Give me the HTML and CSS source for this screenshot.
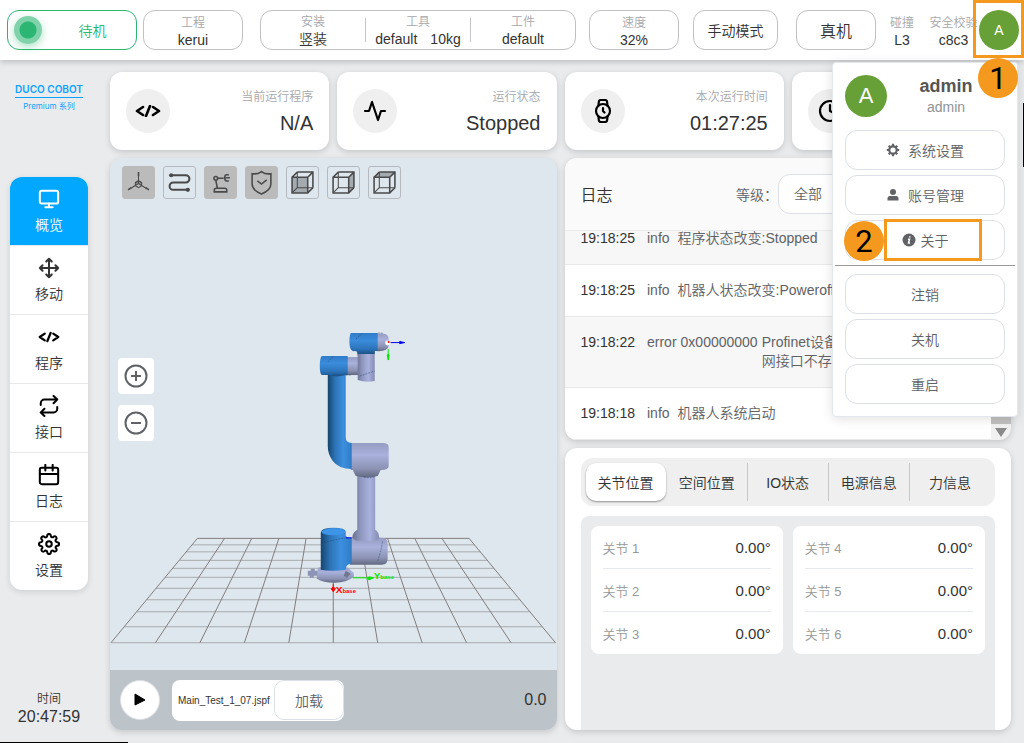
FILE: index.html
```
<!DOCTYPE html>
<html lang="zh-CN">
<head>
<meta charset="utf-8">
<meta name="viewport" content="width=device-width, initial-scale=1">
<title>DUCO COBOT</title>
<link rel="stylesheet" href="styles.css">
</head>
<body>
<svg class="defs" aria-hidden="true">
  <defs>
    <symbol id="i-code" viewBox="0 0 26 12"><path d="M8 2 2 6l6 4M15 1l-4 10M18 2l6 4-6 4"/></symbol>
    <symbol id="i-monitor" viewBox="0 0 24 24"><rect x="2" y="3" width="20" height="14" rx="2"/><path d="M8 21h8M12 17v4"/></symbol>
    <symbol id="i-move" viewBox="0 0 24 24"><path d="m5 9-3 3 3 3M9 5l3-3 3 3M15 19l-3 3-3-3M19 9l3 3-3 3M2 12h20M12 2v20"/></symbol>
    <symbol id="i-repeat" viewBox="0 0 24 24"><path d="m17 1 4 4-4 4M3 11V9a4 4 0 0 1 4-4h14M7 23l-4-4 4-4M21 13v2a4 4 0 0 1-4 4H3"/></symbol>
    <symbol id="i-calendar" viewBox="0 0 24 24"><rect x="2" y="4" width="20" height="18" rx="2"/><path d="M16 1v6M8 1v6M2 11h20"/></symbol>
    <symbol id="i-settings" viewBox="0 0 24 24"><circle cx="12" cy="12" r="3"/><path d="M19.4 15a1.65 1.65 0 0 0 .33 1.82l.06.06a2 2 0 1 1-2.83 2.83l-.06-.06a1.65 1.65 0 0 0-2.8 1.17V21a2 2 0 0 1-4 0v-.09A1.65 1.65 0 0 0 9 19.4a1.65 1.65 0 0 0-1.82.33l-.06.06a2 2 0 1 1-2.83-2.83l.06-.06a1.65 1.65 0 0 0-1.17-2.8H3a2 2 0 0 1 0-4h.09A1.65 1.65 0 0 0 4.6 9a1.65 1.65 0 0 0-.33-1.82l-.06-.06a2 2 0 1 1 2.83-2.83l.06.06A1.65 1.65 0 0 0 9 4.6h.1A1.65 1.65 0 0 0 10 3.09V3a2 2 0 0 1 4 0v.09a1.65 1.65 0 0 0 2.8 1.17l.06-.06a2 2 0 1 1 2.83 2.83l-.06.06A1.65 1.65 0 0 0 19.4 9v.1a1.65 1.65 0 0 0 1.51.9H21a2 2 0 0 1 0 4h-.09a1.65 1.65 0 0 0-1.51 1z"/></symbol>
    <symbol id="i-activity" viewBox="0 0 24 24"><path d="M22 12h-4l-3 9L9 3l-3 9H2"/></symbol>
    <symbol id="i-watch" viewBox="0 0 24 24"><circle cx="12" cy="12" r="7"/><path d="M12 9v3l1.5 1.5M16.5 17.3l-.35 3.9a2 2 0 0 1-2 1.8H9.8a2 2 0 0 1-2-1.8l-.35-3.9m0-10.6.35-3.9a2 2 0 0 1 2-1.8h4.3a2 2 0 0 1 2 1.8l.35 3.9"/></symbol>
    <symbol id="i-clock" viewBox="0 0 24 24"><circle cx="12" cy="12" r="10"/><path d="M12 6v6l4 2"/></symbol>
    <symbol id="i-cube" viewBox="0 0 24 24"><path d="M2 7h15v15H2zM7 2h15v15M22 2l-5 5M7 2 2 7M22 17l-5 5"/><path class="thin" d="M7 2v15h15M7 17l-5 5"/></symbol>
  </defs>
</svg>

<header class="topbar">
  <button class="box status" type="button"><span class="status-dot"></span><span class="status-text">待机</span></button>
  <div class="box project"><span class="cap">工程</span><span class="val">kerui</span></div>
  <div class="box setup">
    <div class="setup-cell"><span class="cap">安装</span><span class="val">竖装</span></div>
    <div class="setup-cell"><span class="cap">工具</span><span class="val pair"><span>default</span><span>10kg</span></span></div>
    <div class="setup-cell"><span class="cap">工件</span><span class="val">default</span></div>
  </div>
  <div class="box speed"><span class="cap">速度</span><span class="val">32%</span></div>
  <button class="box mode" type="button">手动模式</button>
  <button class="box machine" type="button">真机</button>
  <div class="plain collision"><span class="cap">碰撞</span><span class="val">L3</span></div>
  <div class="plain safety"><span class="cap">安全校验</span><span class="val">c8c3</span></div>
  <button class="avatar" type="button">A</button>
</header>

<div class="page">
  <aside class="side">
    <div class="logo"><span class="logo-name">DUCO COBOT</span><span class="logo-sub">Premium 系列</span></div>
    <nav class="nav">
      <a class="nav-item active" href="#overview"><svg class="icon"><use href="#i-monitor"/></svg>概览</a>
      <a class="nav-item" href="#move"><svg class="icon soft"><use href="#i-move"/></svg>移动</a>
      <a class="nav-item" href="#program"><svg class="icon code"><use href="#i-code"/></svg>程序</a>
      <a class="nav-item" href="#io"><svg class="icon"><use href="#i-repeat"/></svg>接口</a>
      <a class="nav-item" href="#log"><svg class="icon"><use href="#i-calendar"/></svg>日志</a>
      <a class="nav-item" href="#settings"><svg class="icon"><use href="#i-settings"/></svg>设置</a>
    </nav>
    <div class="clock"><span class="clock-cap">时间</span><span class="clock-val">20:47:59</span></div>
  </aside>

  <main class="grid">
    <section class="card stat"><span class="disc"><svg class="icon code"><use href="#i-code"/></svg></span><div class="stat-text"><span class="cap">当前运行程序</span><span class="big">N/A</span></div></section>
    <section class="card stat"><span class="disc"><svg class="icon"><use href="#i-activity"/></svg></span><div class="stat-text"><span class="cap">运行状态</span><span class="big">Stopped</span></div></section>
    <section class="card stat"><span class="disc"><svg class="icon"><use href="#i-watch"/></svg></span><div class="stat-text"><span class="cap">本次运行时间</span><span class="big">01:27:25</span></div></section>
    <section class="card stat"><span class="disc"><svg class="icon"><use href="#i-clock"/></svg></span></section>

    <section class="card viewer">
      <div class="scene">
        <svg class="scene-art" viewBox="110 158 447 512" role="img" aria-label="机器人">
          <defs>
            <linearGradient id="bh"><stop offset="0" stop-color="#17446f"/><stop offset=".3" stop-color="#2c73b5"/><stop offset=".65" stop-color="#3c8fdf"/><stop offset="1" stop-color="#2f7cc6"/></linearGradient>
            <linearGradient id="bv" x2="0" y2="1"><stop offset="0" stop-color="#2f7cc8"/><stop offset=".35" stop-color="#3b8cdc"/><stop offset=".75" stop-color="#2c74ba"/><stop offset="1" stop-color="#1b5187"/></linearGradient>
            <linearGradient id="gh"><stop offset="0" stop-color="#6a708f"/><stop offset=".3" stop-color="#8e96bd"/><stop offset=".65" stop-color="#a9b2df"/><stop offset="1" stop-color="#858cb0"/></linearGradient>
            <linearGradient id="gv" x2="0" y2="1"><stop offset="0" stop-color="#969dc2"/><stop offset=".35" stop-color="#a9b1dc"/><stop offset=".75" stop-color="#8b92b3"/><stop offset="1" stop-color="#62687f"/></linearGradient>
          </defs>
          <path class="grid-h" d="M192 545H475M186 552H481M179.500 560.500H487.500M172.500 568.500H494.500M165 577.500H502M156 588.500H511M147 600H520M137 612H530M124.500 627H542.500M111 643H556"/>
          <path class="grid-v" d="M197.500 538.500H469.500M197.500 538.500 111 643M224.700 538.500 155.500 643M251.900 538.500 200 643M279.100 538.500 244.500 643M306.300 538.500 289 643M333.500 538.500V643M360.700 538.500 378 643M387.900 538.500 422.500 643M415.100 538.500 467 643M442.300 538.500 511.500 643M469.500 538.500 556 643"/>
          <path fill="#8d94b5" d="M308 571h3v-2h4v2h4v5h-5v2h-4v-2h-2z"/>
          <path fill="url(#gv)" d="M318 568q16-3 30 0l6 5v4q-7 6-19 6t-18-4z"/>
          <path fill="#70768e" d="m346 571 5 3-4 4-3-2z"/>
          <path fill="url(#gv)" d="M350 538h32q6 0 6 6v15q0 6-6 6h-32z"/>
          <path fill="url(#bh)" d="M321 533q0-5 13-5 12 0 12 4v4q1 2 6 2v26q-6 0-6 6-14 2-25 0z"/>
          <ellipse cx="333.500" cy="532" rx="12" ry="3.500" fill="#3e94e6"/>
          <path fill="url(#gh)" d="M357.500 473h18v57q4 2 4 9l-3 2h-20l-4-3q0-5 5-8z"/>
          <path fill="url(#gv)" d="M351 443h32q6 0 6 4v19q0 4-8 4l-3 6q-11 3-22 0l-3-6h-2z"/>
          <path fill="url(#bh)" d="M328 371h18v66q0 6 6 6v26q-13 0-19-8-5-7-5-15z"/>
          <path fill="url(#gv)" d="M346 357h16v18h-16z"/>
          <path fill="url(#gh)" d="M357 350h18v31q-9 2-17-1v-23z"/>
          <path fill="url(#bv)" d="M322 356h26v19h-3q-8 3-16 0h-7q-2-1-2-9t2-10z"/>
          <path fill="url(#gv)" d="M376 334q12-2 13 4v8q-1 6-13 5z"/>
          <path fill="url(#bv)" d="M351 333h27v18h-3v3h-17q0-3-3-3-4 1-5-5-1-9 1-13z"/>
          <path class="seam" d="m356 339 7-6M328 362l6-6M360 376l15-5M364 477q8 2 12-1M378 561q3-8 5-20M321 543l24-5M334 375h18M378 333h5"/>
          <path stroke="#0000f0" fill="#0000f0" d="M391 342.500h8l1-1 5 1-5 1-1-1M346 538h6"/>
          <path stroke="#00e800" fill="#00e800" d="M388.500 349v5l-1 1 1 5 1-5-1-1M353 578h15l1-1 5 1-5 2-1-2"/>
          <circle cx="388" cy="343" r="2.500" fill="#fff"/><circle cx="389" cy="342" r="1" fill="red"/>
          <path stroke="red" fill="red" d="M333.500 584v3l2 2-2 3-2-3 2-2"/>
          <text class="axis axis-x" x="336" y="593">X<tspan class="sub">base</tspan></text>
          <text class="axis axis-y" x="374" y="579">Y<tspan class="sub">base</tspan></text>
        </svg>
        <div class="tools">
          <button class="tool on" type="button" aria-label="坐标系"><svg viewBox="0 0 24 24"><path class="thin" d="M12 13V3m0 10-8 5m8-5 8 5M9 12l3-2 3 2v3l-3 2-3-2zm0 0 3 1 3-1"/><path d="M12 2v4M2 19l3-2M22 19l-3-2"/></svg></button>
          <button class="tool" type="button" aria-label="轨迹"><svg viewBox="0 0 24 24"><path class="bold" d="M4 5h14a3.500 3.500 0 0 1 0 7H6a3.500 3.500 0 0 0 0 7h14"/><circle class="fill" cx="4" cy="5" r="2"/><circle class="fill" cx="20" cy="19" r="2"/></svg></button>
          <button class="tool on" type="button" aria-label="机器人模型"><svg viewBox="0 0 24 24"><path d="M6 19.500q0-2 2-2h8q2 0 2 2v1.500H6zM9 17.500 7.500 10M9 8h6M20 4.500h-2q-2 0-2 3t2 3h2M17 7.500h4"/><circle cx="7.500" cy="8" r="1.800"/></svg></button>
          <button class="tool on" type="button" aria-label="安全"><svg viewBox="0 0 24 24"><path d="M12 1.500q4 3 9 2v10q0 6-9 9.500-9-3.500-9-9.500v-10q5 1 9-2zM8 10.500l4 3 5-4"/></svg></button>
          <button class="tool" type="button" aria-label="前视图"><svg viewBox="0 0 24 24"><path class="face" d="M2 7h15v15H2z"/><use href="#i-cube"/></svg></button>
          <button class="tool" type="button" aria-label="右视图"><svg viewBox="0 0 24 24"><path class="face" d="m17 7 5-5v15l-5 5z"/><use href="#i-cube"/></svg></button>
          <button class="tool" type="button" aria-label="俯视图"><svg viewBox="0 0 24 24"><path class="face" d="m2 7 5-5h15l-5 5z"/><use href="#i-cube"/></svg></button>
        </div>
        <div class="zoom">
          <button class="zoom-btn" type="button" aria-label="放大"><svg viewBox="0 0 24 24"><circle cx="12" cy="12" r="10.500"/><path d="M12 7v10M7 12h10"/></svg></button>
          <button class="zoom-btn" type="button" aria-label="缩小"><svg viewBox="0 0 24 24"><circle cx="12" cy="12" r="10.500"/><path d="M7 12h10"/></svg></button>
        </div>
      </div>
      <div class="runbar">
        <button class="play" type="button" aria-label="运行"><svg viewBox="0 0 12 14"><path d="M1 1v11l10-5z"/></svg></button>
        <div class="file"><span class="file-name">Main_Test_1_07.jspf</span><button class="load" type="button">加载</button></div>
        <span class="ratio">0.0</span>
      </div>
    </section>

    <section class="card log">
      <div class="log-head">
        <h2>日志</h2>
        <label for="level">等级：</label>
        <select id="level"><option>全部</option></select>
      </div>
      <div class="log-body">
        <div class="log-list">
          <div class="row alt"><time>19:18:25</time><span>info</span><span></span><p>程序状态改变:Stopped</p></div>
          <div class="row"><time>19:18:25</time><span>info</span><span></span><p>机器人状态改变:Poweroff</p></div>
          <div class="row alt"><time>19:18:22</time><span>error</span><span>0x00000000</span><p>Profinet设备错误<br>网接口不存在</p></div>
          <div class="row"><time>19:18:18</time><span>info</span><span></span><p>机器人系统启动</p></div>
        </div>
        <div class="bar"><svg viewBox="0 0 20 16"><path d="M4 4h12l-6 9z"/></svg></div>
      </div>
    </section>

    <section class="card info">
      <div class="tabs" role="tablist">
        <button class="tab selected" role="tab" aria-selected="true" type="button">关节位置</button>
        <button class="tab" role="tab" type="button">空间位置</button>
        <button class="tab" role="tab" type="button">IO状态</button>
        <button class="tab" role="tab" type="button">电源信息</button>
        <button class="tab" role="tab" type="button">力信息</button>
      </div>
      <div class="joints">
        <dl class="joint-card">
          <div><dt>关节 1</dt><dd>0.00°</dd></div>
          <div><dt>关节 2</dt><dd>0.00°</dd></div>
          <div><dt>关节 3</dt><dd>0.00°</dd></div>
        </dl>
        <dl class="joint-card">
          <div><dt>关节 4</dt><dd>0.00°</dd></div>
          <div><dt>关节 5</dt><dd>0.00°</dd></div>
          <div><dt>关节 6</dt><dd>0.00°</dd></div>
        </dl>
      </div>
    </section>
  </main>
</div>

<div class="menu">
  <div class="menu-user">
    <span class="menu-avatar">A</span>
    <div class="menu-names"><strong>admin</strong><span>admin</span></div>
  </div>
  <div class="menu-group">
    <button class="menu-btn" type="button"><svg viewBox="0 0 14 14"><circle class="ring" cx="7" cy="7" r="3.700"/><path class="teeth" d="M7 3V.800M7 11v2.200M3 7H.800M11 7h2.200M4 4 2.700 2.700M10 4l1.300-1.300M4 10l-1.300 1.300M10 10l1.300 1.300"/></svg>系统设置</button>
    <button class="menu-btn" type="button"><svg viewBox="0 0 14 14"><circle cx="7" cy="4" r="3"/><path d="M1.500 12.500v-2Q1.500 8 4 8h6q2.500 0 2.500 2.500v2z"/></svg>账号管理</button>
    <button class="menu-btn about" type="button"><svg viewBox="0 0 14 14"><circle cx="7" cy="7" r="6.500"/><path class="mark" d="M7.800 3.200v1.200M6 6.200h1.500L6.500 10H8"/></svg>关于</button>
  </div>
  <div class="menu-group second">
    <button class="menu-btn" type="button">注销</button>
    <button class="menu-btn" type="button">关机</button>
    <button class="menu-btn" type="button">重启</button>
  </div>
  <span class="mark-box box-two"></span>
  <span class="mark-num num-two">2</span>
</div>
<span class="mark-box box-one"></span>
<span class="mark-num num-one">1</span>
<span class="edge-right"></span>
<span class="edge-bottom"></span>
</body>
</html>
```
FILE: styles.css
```
* { box-sizing: border-box; }

body {
  margin: 0;
  min-height: 100vh;
  display: flex;
  flex-direction: column;
  position: relative;
  background: #eaebed;
  color: #333;
  font-family: "Liberation Sans", "Noto Sans CJK SC", sans-serif;
  font-size: 14px;
  font-weight: 350;
}

button, select {
  font: inherit;
  color: inherit;
  margin: 0;
  padding: 0;
  background: #fff;
}

h2, p, dl, dd { margin: 0; }
.defs { position: absolute; width: 0; height: 0; }

/* top bar */
.topbar {
  display: flex;
  align-items: center;
  height: 60px;
  padding: 0 5px 0 7px;
  background: #fff;
  box-shadow: 0 2px 6px rgba(0, 0, 0, .2);
}
.box {
  height: 40px;
  border: 1px solid #bfc1c4;
  border-radius: 12px;
  background: #fff;
}
.status { flex: 1 1 130px; margin-right: 6px; display: flex; align-items: center; padding: 0 6px; border-color: #2bb673; color: #2bb673; }
.status-dot { width: 28px; height: 28px; border-radius: 50%; background: radial-gradient(circle, #2bb673 8px, #80d2aa 9px); box-shadow: 0 3px 8px rgba(43, 182, 115, .4); }
.status-text { flex: 1; padding-left: 13px; }
.project { flex: 1 1 100px; margin-right: 17px; }
.setup { flex: 3 1 316px; margin-right: 13px; }
.speed { flex: 1 1 90px; margin-right: 14px; }
.mode { flex: 1 1 85px; margin-right: 18px; }
.machine { flex: 1 1 80px; margin-right: 12px; font-size: 16px; }
.project, .speed, .plain, .setup-cell {
  display: flex;
  flex-direction: column;
  align-items: center;
  justify-content: center;
}
.project, .speed, .plain { padding-top: 2px; }
.setup { display: flex; align-items: center; }
.setup-cell { flex: 1 1 0; }
.setup-cell + .setup-cell { border-left: 1px solid #c3c5c8; height: 24px; }
.cap { font-size: 12px; line-height: 18px; color: #a5a8ad; white-space: nowrap; }
.val { font-size: 14px; line-height: 16px; white-space: nowrap; }
.pair { display: flex; gap: 13px; }
.plain { height: 40px; }
.collision { flex: 0 0 28px; margin-right: 12px; }
.safety { flex: 0 0 51px; }
.avatar { flex: none; width: 40px; height: 40px; border: 0; border-radius: 50%; background: #67a037; color: #fff; }

/* page frame */
.page { flex: 1; display: flex; padding: 12px 13px 13px 0; }
.side { width: 110px; flex: none; display: flex; flex-direction: column; padding: 11px 22px 0 10px; }
.logo { display: flex; flex-direction: column; color: #0aa3ff; align-self: center; white-space: nowrap; }
.logo-name { font: 600 10px/12px Inter, sans-serif; border-bottom: 1px solid #0aa3ff; padding-bottom: 2px; text-align: center; }
.logo-sub { font: 400 8px/12px Inter, "Noto Sans CJK SC", sans-serif; padding-top: 2px; text-align: center; }
.nav { margin-top: 65px; border-radius: 12px; overflow: hidden; background: #fff; box-shadow: 0 2px 6px rgba(0, 0, 0, .12); }
.nav-item {
  display: flex;
  flex-direction: column;
  align-items: center;
  justify-content: center;
  gap: 5px;
  height: 69px;
  border-bottom: 1px solid #e8e8ea;
  color: #333;
  text-decoration: none;
  line-height: 20px;
}
.nav-item:last-child { border-bottom: 0; height: 68px; }
.nav-item.active { background: #02a7ff; color: #fff; }
.nav-item.active .icon { stroke: #fff; }
.icon { width: 22px; height: 22px; fill: none; stroke: #000; stroke-width: 2.2; stroke-linecap: round; stroke-linejoin: round; }
.icon.soft { stroke: #333; }
.icon.code { stroke-width: 2.6; }
.clock { margin-top: auto; padding-bottom: 4px; display: flex; flex-direction: column; align-items: center; }
.clock-cap { font-size: 12px; line-height: 17px; }
.clock-val { font-size: 16px; line-height: 18px; }

.grid {
  flex: 1;
  min-width: 0;
  display: grid;
  grid-template-columns: repeat(4, minmax(0, 1fr));
  grid-template-rows: 78px minmax(240px, 1fr) minmax(240px, 1fr);
  gap: 8px;
}
.card { border-radius: 12px; background: #fff; box-shadow: 0 2px 6px rgba(0, 0, 0, .16); overflow: hidden; }

/* status cards */
.stat { display: flex; align-items: center; justify-content: space-between; padding: 0 16px; }
.disc { width: 44px; height: 44px; border-radius: 50%; background: #efefef; display: grid; place-items: center; }
.disc .icon { width: 24px; height: 24px; }
.disc .icon.code { width: 28px; height: 12px; }
.stat-text { display: flex; flex-direction: column; align-items: flex-end; gap: 4px; padding-top: 2px; }
.big { font-size: 20px; line-height: 26px; }

/* 3D viewer */
.viewer { grid-column: span 2; grid-row: span 2; display: flex; flex-direction: column; background: #dfe7ee; }
.scene { flex: 1; min-height: 0; position: relative; }
.scene-art { display: block; position: absolute; inset: 0; width: 100%; height: 100%; }
.grid-h { stroke: #a7abae; fill: none; }
.grid-v { stroke: #827c7c; fill: none; }
.seam { stroke: #26456b; stroke-width: 1; stroke-dasharray: 2 1; fill: none; opacity: .5; }
.axis { font-size: 10px; font-weight: 700; }
.axis .sub { font-size: 6px; }
.axis-x { fill: #f00; }
.axis-y { fill: #00e800; }
.tools { position: absolute; left: 12px; top: 8px; display: flex; gap: 8px; }
.tool { width: 33px; height: 33px; display: grid; place-items: center; border: 1px solid #b4babf; border-radius: 3px; background: transparent; }
.tool.on { background: #bbb; border-color: #bbb; }
.tool svg { width: 25px; height: 25px; fill: none; stroke: #4a4a4a; stroke-width: 1.5; }
.tool .thin, .thin { stroke-width: 1; }
.tool .bold { stroke-width: 2; }
.tool .fill { fill: #4a4a4a; stroke: none; }
.tool .face { fill: #a3aab0; stroke: none; }
.zoom { position: absolute; left: 8px; top: 200px; display: flex; flex-direction: column; gap: 11px; }
.zoom-btn { width: 36px; height: 36px; border: 0; border-radius: 4px; display: grid; place-items: center; }
.zoom-btn svg { width: 24px; height: 24px; fill: none; stroke: #606266; stroke-width: 2; }
.runbar { height: 60px; display: flex; align-items: center; gap: 12px; padding: 0 10px; background: #bcc4ca; }
.play { width: 40px; height: 40px; border: 1px solid #dcdfe6; border-radius: 50%; display: grid; place-items: center; }
.play svg { width: 12px; height: 14px; stroke: #000; stroke-linejoin: round; }
.file { display: flex; align-items: center; height: 41px; padding-left: 6px; border-radius: 8px; background: #fff; }
.file-name { width: 96px; font-size: 10px; white-space: nowrap; }
.load { width: 70px; height: 40px; border: 1px solid #dcdfe6; border-radius: 10px; color: #606266; }
.ratio { margin-left: auto; font-size: 16px; }

/* log */
.log { grid-column: span 2; display: flex; flex-direction: column; }
.log-head { height: 73px; display: flex; align-items: center; padding: 0 16px; background: #fafafa; border-bottom: 1px solid #ebebeb; color: #606266; }
.log-head h2 { margin-right: auto; font-size: 16px; font-weight: 350; color: #333; }
.log-head select { width: 217px; height: 40px; padding: 0 15px; border: 1px solid #dcdfe6; border-radius: 12px; appearance: none; }
.log-body { flex: 1 1 0; height: 0; min-height: 0; display: flex; overflow: hidden; }
.log-list { flex: 1; display: flex; flex-direction: column; justify-content: flex-end; overflow: hidden; }
.row { flex: none; display: flex; gap: 4px; padding: 16px 16px; border-bottom: 1px solid #e9e9eb; line-height: 19px; color: #606266; }
.row.alt { background: #f7f7f7; }
.row time { color: #333; margin-right: 8px; }
.bar { width: 20px; display: flex; align-items: flex-end; background: #c1c1c1; }
.bar svg { width: 20px; height: 16px; background: #f1f1f1; fill: #8a8a8a; }

/* joint info */
.info { grid-column: span 2; display: flex; flex-direction: column; gap: 10px; padding: 10px 16px 0; }
.tabs { display: flex; flex: none; height: 48px; padding: 5px; border-radius: 12px; background: #efefef; }
.tab { flex: 1 1 0; border: 0; border-left: 1px solid #c8c8c8; background: transparent; white-space: nowrap; }
.tab.selected { border: 0; border-radius: 10px; background: #fff; box-shadow: 0 1px 2px rgba(0, 0, 0, .4); }
.tab.selected + .tab { border-left-color: transparent; }
.joints { flex: 1; display: grid; grid-template-columns: 1fr 1fr; gap: 10px; align-items: start; padding: 10px; border-radius: 8px 8px 0 0; background: #eaebed; }
.joint-card { padding: 0 12px; border-radius: 8px; background: #fff; }
.joint-card div { display: flex; justify-content: space-between; align-items: center; height: 43px; border-bottom: 1px solid #e6e8f2; }
.joint-card div:last-child { height: 42px; border-bottom: 0; }
.joint-card dt { font-size: 13px; color: #999; }
.joint-card dd { font-size: 15px; }

/* account menu */
.menu {
  position: absolute;
  top: 62px;
  right: 6px;
  width: 186px;
  padding: 12px 2px;
  background: #fff;
  border: 1px solid #e4e7ed;
  border-radius: 4px;
  box-shadow: 0 2px 12px rgba(0, 0, 0, .12);
  color: #606266;
}
.menu-user { display: flex; align-items: center; padding: 0 10px; }
.menu-avatar { flex: none; width: 42px; height: 42px; border-radius: 50%; background: #67a037; color: #fff; font-size: 22px; line-height: 42px; text-align: center; }
.menu-names { flex: 1; display: flex; flex-direction: column; align-items: center; line-height: 20px; color: #909399; }
.menu-names strong { font-size: 18px; font-weight: 700; line-height: 22px; color: #555; }
.menu-group { display: flex; flex-direction: column; gap: 5px; padding: 13px 10px 5px; }
.menu-group.second { padding: 8px 10px 0; border-top: 1px solid #999; }
.menu-btn { height: 40px; display: flex; align-items: center; justify-content: center; gap: 8px; border: 1px solid #dcdfe6; border-radius: 12px; }
.menu-btn svg { width: 14px; height: 14px; fill: #606266; }
.menu-btn .ring, .menu-btn .teeth { fill: none; stroke: #606266; stroke-width: 2.2; }
.menu-btn .mark { fill: none; stroke: #fff; stroke-width: 1.5; }
.about { gap: 5px; }

/* callouts over the interface */
.mark-box { position: absolute; border: 3px solid #f4981e; pointer-events: none; }
.mark-num { position: absolute; width: 40px; height: 40px; border-radius: 50%; background: #f4981e; color: #000; font: 400 31px/42px Roboto, sans-serif; text-align: center; }
.box-one { top: 0; right: 0; width: 51px; height: 58px; }
.num-one { top: 58px; right: 6px; }
.box-two { top: 156px; left: 51px; width: 98px; height: 42px; }
.num-two { top: 158px; left: 11px; }
.edge-right { position: absolute; right: 0; top: 103px; width: 1px; height: 64px; background: #000; }
.edge-bottom { position: absolute; left: 0; bottom: 0; width: 128px; height: 1px; background: #000; }
```
